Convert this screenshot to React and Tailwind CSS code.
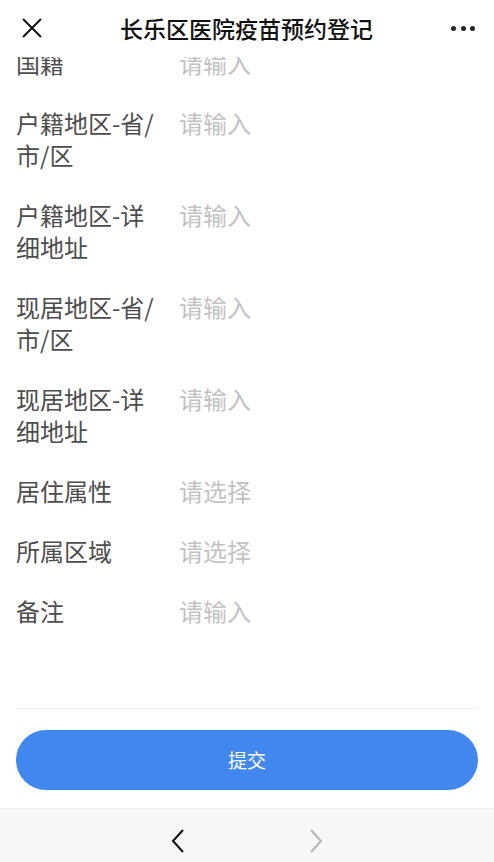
import React from "react";

const rows = [
  ["国籍", "请输入"],
  ["户籍地区-省/市/区", "请输入"],
  ["户籍地区-详细地址", "请输入"],
  ["现居地区-省/市/区", "请输入"],
  ["现居地区-详细地址", "请输入"],
  ["居住属性", "请选择"],
  ["所属区域", "请选择"],
  ["备注", "请输入"],
];

const font = { fontFamily: '"Noto Sans CJK SC", "Noto Sans", sans-serif' };

export default function App() {
  return (
    <div
      className="w-[494px] h-[862px] flex flex-col bg-white overflow-hidden"
      style={font}
    >
      <header className="relative z-10 h-[57px] shrink-0 bg-white flex items-center px-[22px]">
        <svg width="20" height="20" viewBox="0 0 20 20" className="shrink-0 -mt-[1px]">
          <path d="M1 1 L19 19 M19 1 L1 19" stroke="#111" strokeWidth="2" fill="none" />
        </svg>
        <div className="flex-1 text-center text-[23px] leading-[32px] font-medium text-[#111] -mt-[2px]">
          长乐区医院疫苗预约登记
        </div>
        <div className="flex items-center gap-[4.5px] mr-[-3px] -mt-[1px]">
          <span className="w-[5px] h-[5px] rounded-full bg-[#222]" />
          <span className="w-[5px] h-[5px] rounded-full bg-[#222]" />
          <span className="w-[5px] h-[5px] rounded-full bg-[#222]" />
        </div>
      </header>

      <main className="flex-1 overflow-hidden">
        <div className="-mt-[24px] px-4">
          {rows.map(([label, ph]) => (
            <div key={label} className="flex py-[14px] text-[24px] leading-[32px]">
              <div className="w-[144px] shrink-0 text-[#4d4d4d]">{label}</div>
              <div className="ml-[19px] text-[#c2c2c2]">{ph}</div>
            </div>
          ))}
        </div>
      </main>

      <div className="shrink-0 px-4">
        <div className="border-t border-[#f0f0f0] pt-[21px] pb-[18px]">
          <button className="w-full h-[60px] rounded-full bg-[#4287ee] text-white text-[19px] leading-[28px]">
            提交
          </button>
        </div>
      </div>

      <nav className="shrink-0 h-[54px] pt-[10px] bg-[#f7f7f7] border-t border-[#efefef] flex items-center justify-center gap-[124px]">
        <svg width="14" height="24" viewBox="0 0 14 24">
          <path d="M12 1 L2 12 L12 23" stroke="#111" strokeWidth="2" fill="none" />
        </svg>
        <svg width="14" height="24" viewBox="0 0 14 24">
          <path d="M2 1 L12 12 L2 23" stroke="#b3b3b3" strokeWidth="2" fill="none" />
        </svg>
      </nav>
    </div>
  );
}
